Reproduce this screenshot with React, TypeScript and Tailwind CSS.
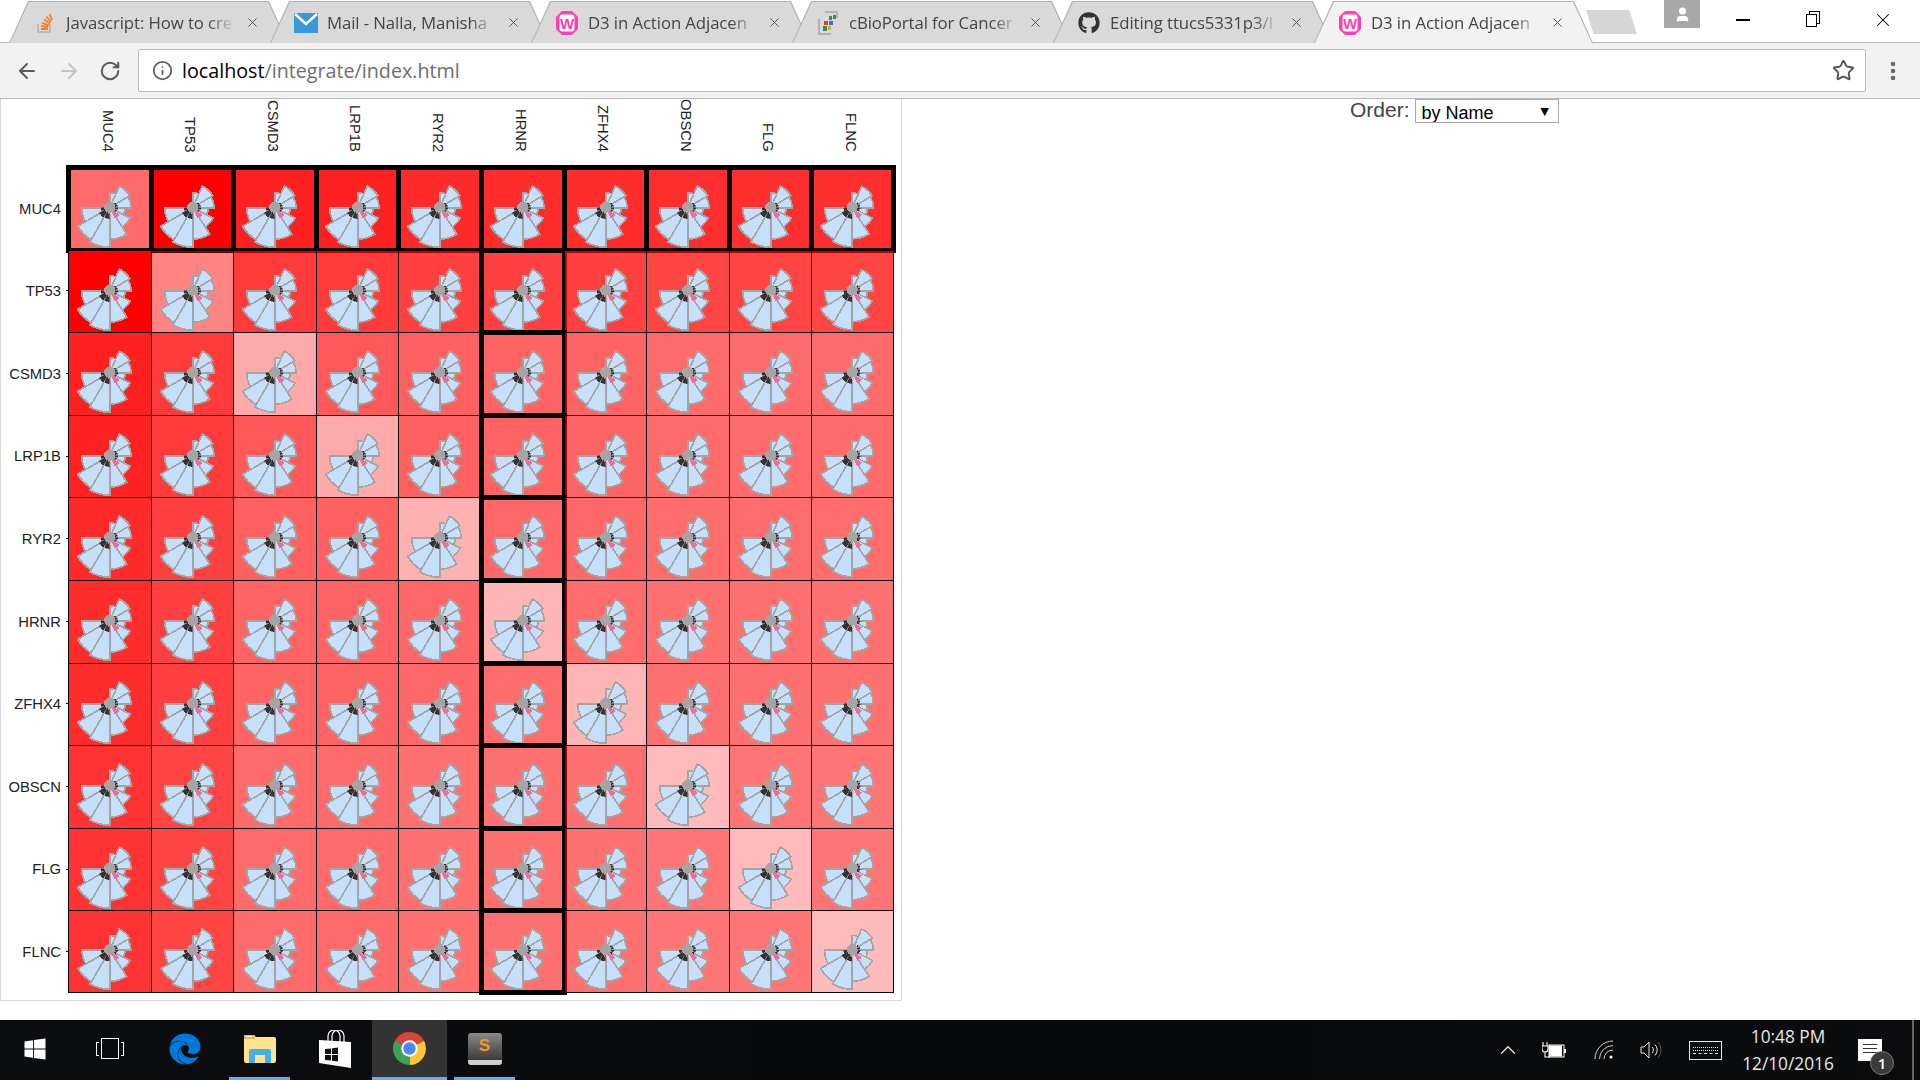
import { ArrowLeft, ArrowRight, ChevronUp, EllipsisVertical, Info, RotateCw, Star, User, X } from "lucide-react";
import { FaEdge, FaGithub, FaWindows } from "react-icons/fa";

const genes = ["MUC4", "TP53", "CSMD3", "LRP1B", "RYR2", "HRNR", "ZFHX4", "OBSCN", "FLG", "FLNC"];

// green/blue channel of each cell, the red is always 255
const matrix = [
  [107, 0, 32, 32, 42, 44, 44, 46, 46, 46],
  [0, 133, 58, 58, 64, 64, 64, 68, 68, 68],
  [32, 58, 170, 88, 96, 100, 100, 106, 106, 106],
  [34, 58, 88, 170, 96, 100, 100, 106, 106, 106],
  [42, 64, 96, 96, 176, 104, 104, 108, 108, 108],
  [44, 64, 100, 100, 104, 181, 108, 112, 112, 112],
  [44, 64, 100, 100, 104, 108, 181, 112, 112, 112],
  [51, 68, 106, 106, 112, 112, 112, 187, 116, 116],
  [51, 68, 106, 106, 112, 112, 112, 116, 187, 116],
  [51, 68, 106, 106, 112, 112, 112, 116, 116, 187],
];

const tabs = [
  { title: "Javascript: How to cre", icon: <StackIcon /> },
  { title: "Mail - Nalla, Manisha", icon: <MailIcon /> },
  { title: "D3 in Action Adjacen", icon: <WampIcon /> },
  { title: "cBioPortal for Cancer", icon: <BioIcon /> },
  { title: "Editing ttucs5331p3/I", icon: <FaGithub className="h-[22px] w-[22px] text-[#333]" /> },
  { title: "D3 in Action Adjacen", icon: <WampIcon />, active: true },
];

function wedge(cx: number, cy: number, from: number, to: number, r: number) {
  const rad = (a: number) => (a * Math.PI) / 180;
  const x1 = cx + r * Math.sin(rad(from));
  const y1 = cy - r * Math.cos(rad(from));
  const x2 = cx + r * Math.sin(rad(to));
  const y2 = cy - r * Math.cos(rad(to));
  return `M${cx} ${cy}L${x1} ${y1}A${r} ${r} 0 0 1 ${x2} ${y2}Z`;
}

const petals = [
  [0, 24, 15],
  [24, 59, 23.5],
  [59, 90, 21.5],
  [90, 117, 15.5],
  [117, 147, 23],
  [147, 180, 31.5],
  [180, 210, 39.5],
  [210, 240, 37],
  [240, 270, 28],
];
const darks = [
  [182, 208, 11],
  [214, 244, 11.5],
  [250, 268, 8.5],
  [48, 58, 7.5],
  [68, 80, 8],
  [90, 102, 8],
  [108, 120, 7],
];

function Rose() {
  const cx = 40.7;
  const cy = 39.7;
  return (
    <svg viewBox="0 0 81.6 81.6" shapeRendering="crispEdges" className="relative block h-full w-full overflow-visible">
      {petals.map(([a, b, r]) => (
        <path key={a} d={wedge(cx, cy, a, b, r)} fill="#c6e0fc" stroke="#a5a5a5" strokeWidth="1.7" />
      ))}
      {darks.map(([a, b, r]) => (
        <path key={a} d={wedge(cx, cy, a, b, r)} fill="#333333" stroke="#333333" strokeWidth="0.5" />
      ))}
      <path d={wedge(cx, cy, 126, 154, 12)} fill="#f26d96" />
      <path d={wedge(cx, cy, 166, 178, 7.5)} fill="#f5a0bb" />
      <path d={wedge(cx, cy, 184, 198, 6.5)} fill="#f26d96" />
      <circle cx={cx} cy={cy - 0.5} r="5.6" fill="#a5a5a5" />
    </svg>
  );
}

function StackIcon() {
  return (
    <svg viewBox="0 0 22 22" className="h-[22px] w-[22px]">
      <path d="M4 12v8h12v-8" fill="none" stroke="#bcbbbb" strokeWidth="2" />
      <path d="M7 17h7M7.2 14l7 1M8.2 10.8l6.6 2.6M10 7.5l6 4M12.4 4.6l4.6 5.4M15.6 2l2.6 6.4" stroke="#f48024" strokeWidth="1.8" fill="none" />
    </svg>
  );
}

function MailIcon() {
  return (
    <svg viewBox="0 0 24 24" className="h-[24px] w-[24px] shrink-0">
      <rect y="2" width="24" height="20" fill="#3a96dd" />
      <path d="M1 3l11 10L23 3" fill="none" stroke="#ffffff" strokeWidth="2.6" />
    </svg>
  );
}

function WampIcon() {
  return (
    <svg viewBox="0 0 22 24" className="h-[24px] w-[22px]">
      <path d="M6 0h10l6 6v12l-6 6H6l-6-6V6z" fill="#ff3eb5" />
      <rect x="3.500" y="3.500" width="15" height="17" rx="3" fill="#ffffff" />
      <text x="11" y="17.500" textAnchor="middle" fontSize="15" fontWeight="700" fontFamily="Liberation Sans, sans-serif" fill="#ff3eb5">
        W
      </text>
    </svg>
  );
}

function BioIcon() {
  return (
    <svg viewBox="0 0 22 24" className="h-[24px] w-[22px]">
      <path d="M8 1h12v6M2 8v15h12" fill="none" stroke="#a9a9a9" strokeWidth="1.6" />
      <rect x="12" y="5" width="3" height="4" fill="#3a8f4a" />
      <rect x="16" y="4" width="3" height="4" fill="#3a8f4a" />
      <rect x="7" y="10" width="4" height="4" fill="#d9402e" />
      <rect x="12" y="10" width="4" height="4" fill="#2f7ec2" />
      <rect x="6" y="15" width="4" height="5" fill="#3a8f4a" />
      <rect x="11" y="15" width="3" height="4" fill="#e0a52e" />
    </svg>
  );
}

function ChromeIcon() {
  return (
    <svg viewBox="0 0 32 32" className="h-[33px] w-[33px]">
      <path d={wedge(16, 16, -62, 62, 16)} fill="#d9453a" />
      <path d={wedge(16, 16, 62, 178, 16)} fill="#fbc735" />
      <path d={wedge(16, 16, 178, 298, 16)} fill="#3aa356" />
      <circle cx="16" cy="16" r="8" fill="#ffffff" />
      <circle cx="16" cy="16" r="6" fill="#4a8af0" />
    </svg>
  );
}

function SublimeIcon() {
  return (
    <div className="flex h-[32px] w-[34px] items-center justify-center rounded-[3px] border-b-[5px] border-[#cfcfcf] bg-gradient-to-b from-[#8a8a8a] to-[#3c3c3c] font-['Liberation_Sans',sans-serif] text-[17px] font-bold text-[#f59a23]">
      S
    </div>
  );
}

function ExplorerIcon() {
  return (
    <svg viewBox="0 0 32 30" className="h-[30px] w-[32px]">
      <path d="M0 3a2 2 0 0 1 2-2h8l2 2h18a2 2 0 0 1 2 2v22a2 2 0 0 1-2 2H2a2 2 0 0 1-2-2z" fill="#ffe38c" />
      <path d="M0 1h11v4H0z" fill="#e5b94a" />
      <path d="M2 2.500h6" stroke="#ffffff" strokeWidth="1" />
      <path d="M5 29V17a2 2 0 0 1 2-2h18a2 2 0 0 1 2 2v12h-6v-8h-10v8z" fill="#3fb1e6" />
    </svg>
  );
}

function StoreIcon() {
  return (
    <svg viewBox="0 0 32 38" className="h-[38px] w-[32px]">
      <path d="M0 10l32 2v26L0 33z" fill="#ffffff" />
      <path d="M9 12V6a6 6 0 0 1 12 0v6M13 12V6a6 6 0 0 1 12 0v6" fill="none" stroke="#ffffff" strokeWidth="1.2" />
      <path d="M6 19l6-.6v5.600H6zM13 18.300l6-.7V24h-6zM6 25h6v5.600l-6-.6zM13 25h6v6.400l-6-.7z" fill="#111111" />
    </svg>
  );
}

function TaskButton({ children, active, running }: { children: React.ReactNode; active?: boolean; running?: boolean }) {
  return (
    <div className={`flex h-full w-[75px] flex-col items-center ${active ? "bg-[#333333]" : ""}`}>
      <div className="flex flex-1 items-center justify-center">{children}</div>
      <div className={`mx-auto h-[3px] ${active ? "w-full" : "w-[61px]"} ${running || active ? "bg-[#64aee8]" : ""}`} />
    </div>
  );
}

export default function App() {
  return (
    <div className="flex h-[1080px] w-[1920px] flex-col overflow-hidden bg-white font-['Open_Sans',sans-serif]">
      {/* title bar */}
      <div className="flex h-[43px] shrink-0 items-start border-b border-[#b5b5b5] pl-[9px]">
        {tabs.map((tab, i) => (
          <div
            key={i}
            className={`mt-px mr-[-18px] h-[42px] w-[279px] bg-[#b3b3b3] px-px pt-px [clip-path:polygon(0_100%,19px_0,calc(100%-19px)_0,100%_100%)] ${tab.active ? "relative z-10" : ""}`}
          >
            <div
              className={`flex h-full items-center pl-[24px] [clip-path:polygon(0_100%,19px_0,calc(100%-19px)_0,100%_100%)] ${tab.active ? "bg-[#f2f2f2]" : "bg-[#d9d9d9]"}`}
            >
              <span className="flex w-[22px] shrink-0 items-center justify-center">{tab.icon}</span>
              <span className="ml-[10px] w-[174px] whitespace-nowrap text-[16.800px] tracking-[-0.1px] text-[#444444] [mask-image:linear-gradient(to_right,black_82%,transparent_97%)]">
                {tab.title}
              </span>
              <X className="ml-[5px] h-[15px] w-[15px] text-[#555555]" strokeWidth={1.6} />
            </div>
          </div>
        ))}
        <div className="mt-[10px] ml-[11px] h-[24px] w-[51px] bg-[#d6d6d6] [clip-path:polygon(0_0,85%_0,100%_100%,15%_100%)]" />
        <div className="ml-[27px] flex h-[28px] w-[36px] items-center justify-center bg-[#a8a8a8]">
          <User className="h-[17px] w-[17px] fill-white text-white" />
        </div>
        <div className="ml-[8px] flex h-[40px]">
          <div className="flex w-[70px] items-center justify-center">
            <div className="h-[1.5px] w-[14px] bg-black" />
          </div>
          <div className="flex w-[66px] items-center justify-center">
            <div className="h-[13px] w-[11px] border border-black bg-white shadow-[3px_-3px_0_-1px_#ffffff,3px_-3px_0_0_#000000]" />
          </div>
          <div className="ml-[4px] flex w-[70px] items-center justify-center">
            <X className="h-[22px] w-[22px] text-black" strokeWidth={1.1} />
          </div>
        </div>
      </div>

      {/* toolbar */}
      <div className="flex h-[56px] shrink-0 items-center border-b border-[#b9b9b9] bg-[#f2f2f2]">
        <ArrowLeft className="ml-[15px] h-[24px] w-[24px] text-[#5c5c5c]" strokeWidth={2} />
        <ArrowRight className="ml-[18px] h-[24px] w-[24px] text-[#c4c4c4]" strokeWidth={2} />
        <RotateCw className="ml-[18px] h-[22px] w-[22px] text-[#5c5c5c]" strokeWidth={2.2} />
        <div className="ml-[17px] flex h-[43px] w-[1728px] items-center rounded-[2px] border border-[#bdbdbd] bg-white pl-[13px]">
          <Info className="h-[21px] w-[21px] text-[#5c5c5c]" strokeWidth={2} />
          <span className="ml-[9px] text-[19.700px] text-black">
            localhost<span className="text-[#6e6e6e]">/integrate/index.html</span>
          </span>
          <Star className="mr-[10px] ml-auto h-[23px] w-[23px] text-[#555555]" strokeWidth={2} />
        </div>
        <EllipsisVertical className="ml-[15px] h-[24px] w-[24px] text-[#666666]" strokeWidth={2.6} />
      </div>

      {/* page */}
      <div className="flex min-h-0 flex-1 items-start font-['Liberation_Sans',sans-serif]">
        <div className="h-[902px] w-[902px] shrink-0 border-x border-b border-[#d8d8d8]">
          <div className="grid w-[893px] grid-cols-[67px_repeat(10,82.6px)] grid-rows-[68px_repeat(10,82.6px)] text-[14.800px] text-[#222222]">
            <div />
            {genes.map((g) => (
              <div key={g} className="flex items-end justify-center overflow-visible pr-[4px] pb-[15px]">
                <span className="whitespace-nowrap leading-none [writing-mode:vertical-rl]">{g}</span>
              </div>
            ))}
            {genes.map((g, row) => (
              <div key={g} className="contents">
                <div className="flex items-center justify-end">
                  <span className="mt-px mr-[5px]">{g}</span>
                  <span className="h-px w-[2px] bg-black" />
                </div>
                {genes.map((_, col) => (
                  <div
                    key={col}
                    className={`relative border-t border-l border-black ${col === 9 ? "border-r" : ""} ${row === 9 ? "border-b" : ""}`}
                    style={{ backgroundColor: `rgba(255,0,0,${1 - matrix[row][col] / 255})` }}
                  >
                    {(row === 0 || col === 5) && <div className="absolute inset-[-3px] border-[5px] border-black" />}
                    <Rose />
                  </div>
                ))}
              </div>
            ))}
          </div>
        </div>
        <div className="ml-[448px] flex h-[24px] items-center">
          <span className="mt-[-3px] text-[21px] leading-none text-[#444444]">Order:</span>
          <div className="relative ml-[5px] h-[24px] w-[144px]">
            <select className="h-full w-full appearance-none border border-[#aaaaaa] bg-white pl-[6px] text-[18px] text-black">
              <option>by Name</option>
            </select>
            <span className="absolute top-[2px] right-[7px] text-[14px] text-black">▼</span>
          </div>
        </div>
      </div>

      {/* taskbar */}
      <div className="flex h-[60px] shrink-0 items-stretch bg-gradient-to-r from-[#0b0e10] via-[#08090b] to-[#0b0c0d] text-[#e8e8e8]">
        <div className="ml-[-3px] flex">
          <TaskButton>
            <FaWindows className="h-[24px] w-[24px] text-white" />
          </TaskButton>
          <TaskButton>
            <div className="flex items-center gap-[2px]">
              <div className="h-[14px] w-[3px] border-y border-l border-white" />
              <div className="h-[21px] w-[18px] border border-white" />
              <div className="h-[14px] w-[3px] border-y border-r border-white" />
            </div>
          </TaskButton>
          <TaskButton>
            <FaEdge className="h-[32px] w-[32px] text-[#0078d7]" />
          </TaskButton>
          <TaskButton running>
            <ExplorerIcon />
          </TaskButton>
          <TaskButton>
            <StoreIcon />
          </TaskButton>
          <TaskButton active>
            <ChromeIcon />
          </TaskButton>
          <TaskButton running>
            <SublimeIcon />
          </TaskButton>
        </div>
        <div className="ml-auto flex items-center pr-[6px]">
          <ChevronUp className="h-[26px] w-[26px] text-[#e8e8e8]" strokeWidth={1.2} />
          <svg viewBox="0 0 24 16" className="ml-[21px] h-[16px] w-[24px]">
            <path d="M1 0v4M5 0v4M0 4h6v3a3 3 0 0 1-6 0zM3 10v5h5" fill="none" stroke="#ffffff" strokeWidth="1.100" />
            <rect x="7" y="3" width="15" height="12" fill="none" stroke="#ffffff" />
            <rect x="7" y="3.500" width="13" height="11" fill="#ffffff" />
            <rect x="22" y="7" width="2" height="4" fill="#ffffff" />
          </svg>
          <svg viewBox="0 0 20 20" className="ml-[28px] h-[20px] w-[20px]" fill="none" stroke="#d0d0d0" strokeWidth="1">
            <path d="M1 19A18 18 0 0 1 19 1M5.500 19A13.500 13.500 0 0 1 19 5.500M10 19a9 9 0 0 1 9-9" />
            <circle cx="17" cy="17" r="1.500" fill="#ffffff" stroke="none" />
          </svg>
          <svg viewBox="0 0 22 18" className="ml-[26px] h-[18px] w-[22px]" fill="none" stroke="#e8e8e8" strokeWidth="1">
            <path d="M1 6h3l5-5v16l-5-5H1zM12 6a4 4 0 0 1 0 6M15 3.500a8 8 0 0 1 0 11" />
            <path d="M18 1a12 12 0 0 1 0 16" stroke="#555555" />
          </svg>
          <div className="ml-[27px] flex h-[19px] w-[33px] flex-col justify-center gap-[2px] border border-[#e8e8e8] px-[3px]">
            <div className="border-t border-dotted border-[#e8e8e8]" />
            <div className="border-t border-dotted border-[#e8e8e8]" />
            <div className="border-t border-dashed border-[#e8e8e8]" />
          </div>
          <div className="ml-[20px] flex w-[92px] flex-col items-center text-[17.300px] leading-[27px]">
            <span>10:48 PM</span>
            <span className="whitespace-nowrap">12/10/2016</span>
          </div>
          <div className="relative ml-[24px] h-[22px] w-[24px] bg-white">
            <div className="mx-[5px] mt-[5px] flex flex-col gap-[3px]">
              <div className="h-px bg-[#333333]" />
              <div className="h-px bg-[#333333]" />
              <div className="h-px bg-[#333333]" />
            </div>
            <div className="absolute top-[12px] left-[12px] flex h-[24px] w-[24px] items-center justify-center rounded-full border border-[#777777] bg-[#3a3a3a] text-[15px] font-semibold text-white">
              1
            </div>
          </div>
          <div className="ml-[30px] h-full w-[2px] bg-[#666666]" />
        </div>
      </div>
    </div>
  );
}
